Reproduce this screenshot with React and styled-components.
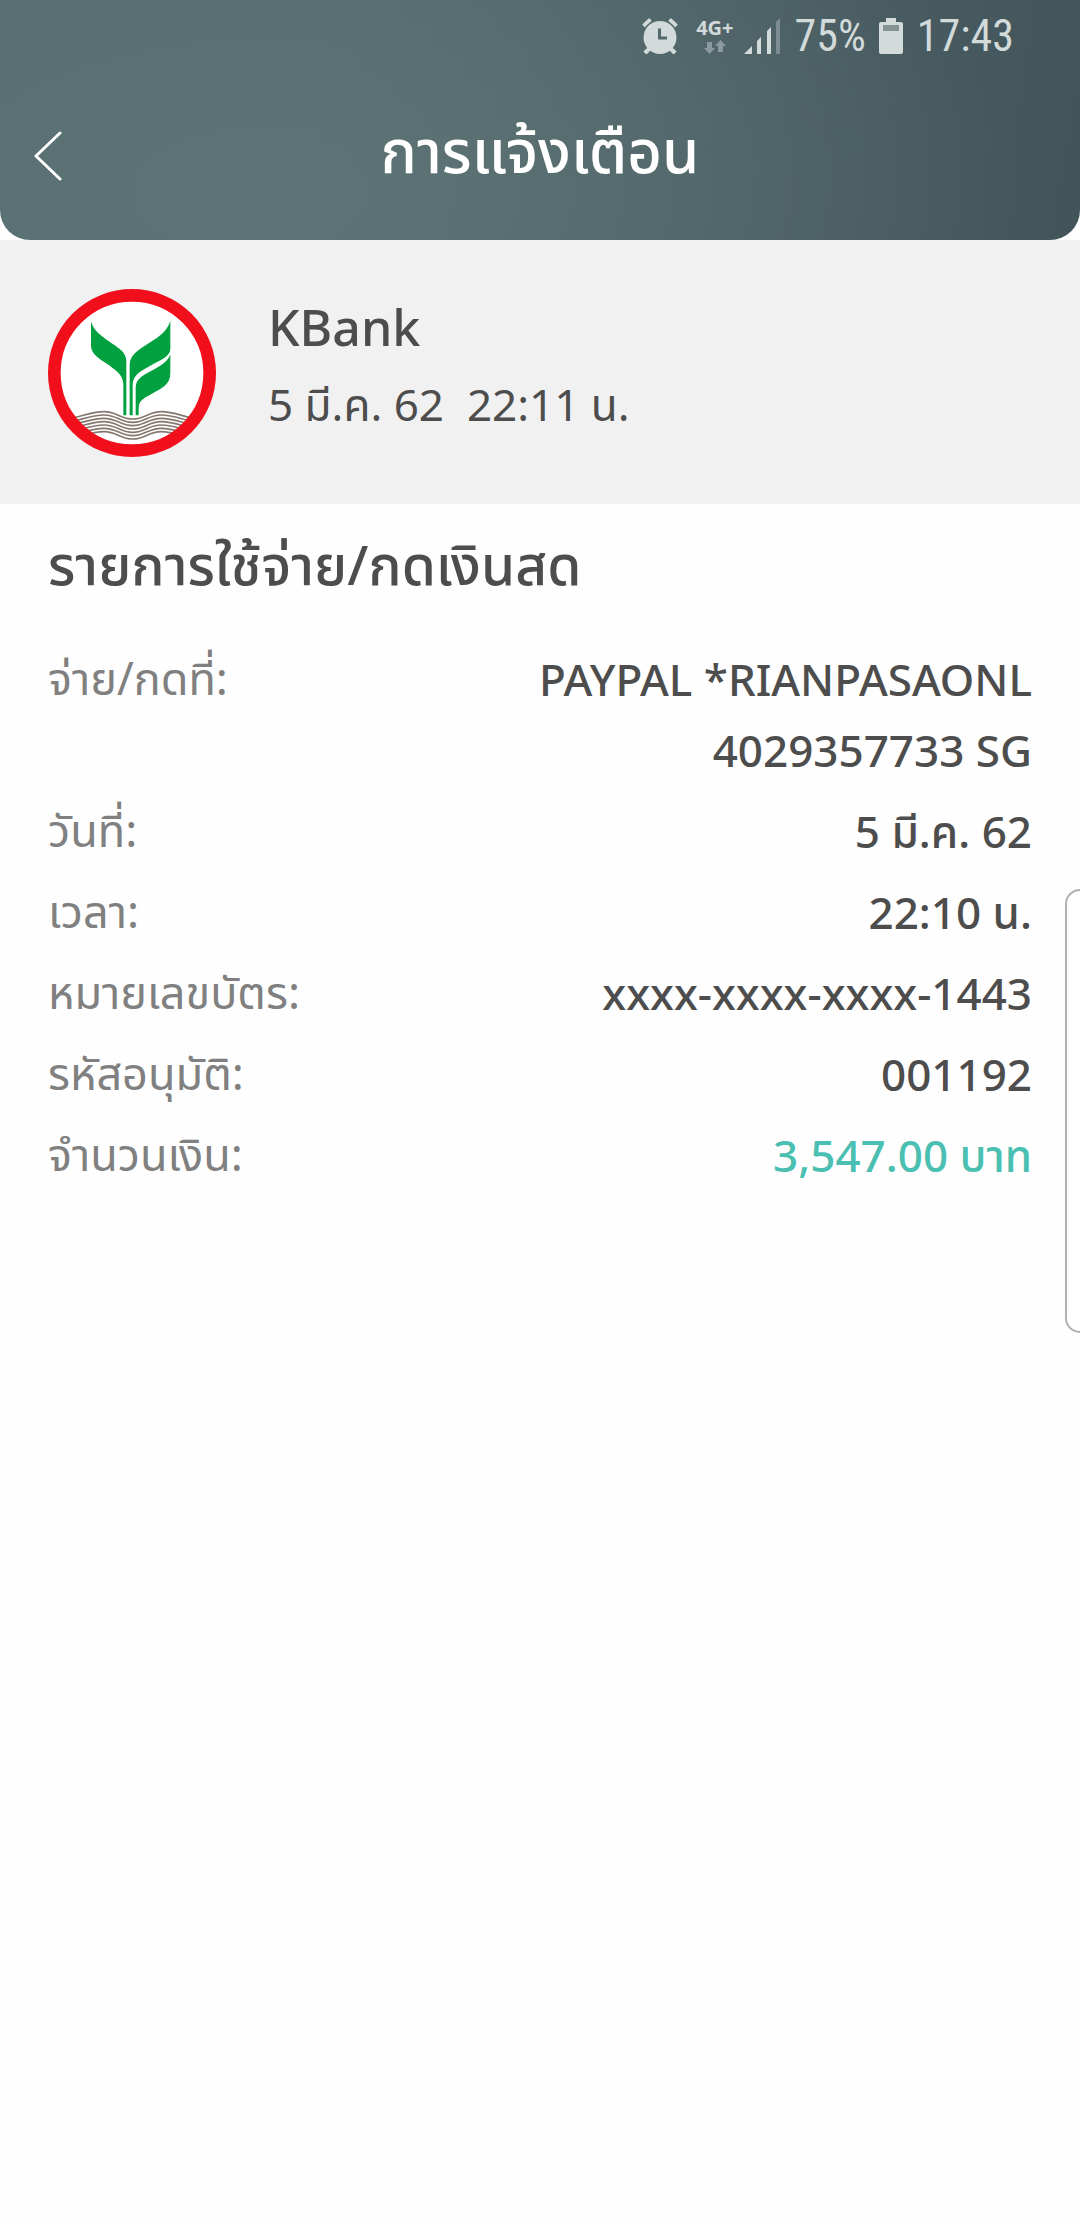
import React from "react";
import styled, { createGlobalStyle } from "styled-components";

const GlobalStyle = createGlobalStyle`
  * { box-sizing: border-box; }
  body {
    margin: 0;
    background: #fefefe;
    color: #4d4d4d;
    font-family: "Noto Sans", "Noto Sans Thai", sans-serif;
  }
`;

const Screen = styled.div`
  position: relative;
  min-height: 100vh;
`;

const Header = styled.header`
  height: 240px;
  border-radius: 0 0 30px 30px;
  background:
    radial-gradient(ellipse 70% 150% at 25% 80%, rgba(94, 116, 118, 0.9), rgba(94, 116, 118, 0) 100%),
    linear-gradient(100deg, #566d70 30%, #42545a 100%);
`;

const StatusBar = styled.div`
  display: flex;
  align-items: center;
  justify-content: flex-end;
  height: 72px;
  padding-right: 66px;
  color: #d2dada;
`;

const StatusIcon = styled.svg`
  display: block;
  flex: none;
  margin-right: ${(p) => p.$gap}px;
`;

const StatusText = styled.span`
  font-family: "Roboto Condensed", Roboto, sans-serif;
  font-size: 44px;
  line-height: 72px;
  margin-right: ${(p) => p.$gap || 0}px;
`;

const Network = styled.div`
  display: flex;
  flex-direction: column;
  align-items: center;
  gap: 2px;
  margin-right: 10px;
  font-size: 20px;
  line-height: 20px;
  font-weight: 700;
`;

const TitleBar = styled.div`
  display: grid;
  grid-template-columns: 96px 1fr 96px;
  align-items: center;
  height: 168px;
`;

const BackButton = styled.button`
  display: flex;
  align-items: center;
  justify-content: center;
  height: 96px;
  padding: 0;
  border: 0;
  background: none;
  color: #fff;
`;

const Title = styled.h1`
  margin: 0;
  padding-bottom: 12px;
  color: #fff;
  font-size: 60px;
  line-height: 84px;
  font-weight: 500;
  text-align: center;
`;

const Sender = styled.section`
  display: flex;
  gap: 52px;
  height: 264px;
  padding: 49px 48px;
  background: #f1f1f1;
`;

const SenderText = styled.div`
  display: flex;
  flex-direction: column;
`;

const SenderName = styled.h2`
  margin: 0;
  font-size: 50px;
  line-height: 76px;
  font-weight: 500;
`;

const SenderDate = styled.time`
  font-size: 44px;
  line-height: 78px;
  white-space: pre;
`;

const Details = styled.main`
  padding: 20px 48px;
`;

const Heading = styled.h2`
  margin: 0 0 40px;
  font-size: 55px;
  line-height: 80px;
  font-weight: 500;
`;

const Rows = styled.dl`
  display: flex;
  flex-direction: column;
  gap: 10px;
  margin: 0;
`;

const Row = styled.div`
  display: flex;
  align-items: flex-start;
  justify-content: space-between;
  font-size: 44px;
  line-height: 71px;
`;

const Label = styled.dt`
  color: #808080;
  font-size: 45px;
  line-height: 68px;
`;

const Value = styled.dd`
  margin: 0;
  font-weight: 500;
  text-align: right;
  white-space: pre-line;
  color: ${(p) => (p.$accent ? "#4bbfb1" : "inherit")};
`;

const EdgePanel = styled.aside`
  position: absolute;
  top: 889px;
  right: 0;
  width: 15px;
  height: 444px;
  border: 2px solid #b0b0b0;
  border-right: 0;
  border-radius: 20px 0 0 20px;
  background: #fff;
`;

const rows = [
  { label: "จ่าย/กดที่:", value: "PAYPAL *RIANPASAONL\n4029357733 SG" },
  { label: "วันที่:", value: "5 มี.ค. 62" },
  { label: "เวลา:", value: "22:10 น." },
  { label: "หมายเลขบัตร:", value: "xxxx-xxxx-xxxx-1443" },
  { label: "รหัสอนุมัติ:", value: "001192" },
  { label: "จำนวนเงิน:", value: "3,547.00 บาท", accent: true },
];

function AlarmIcon() {
  return (
    <StatusIcon $gap={18} width="36" height="36" viewBox="0 0 36 36" fill="currentColor" aria-label="Alarm">
      <path d="M1.500 8 8.500 1.500M34.500 8 27.500 1.500M3 35 9 29M33 35 27 29" stroke="currentColor" strokeWidth="4" />
      <circle cx="18" cy="19.500" r="18" fill="#53686b" />
      <path d="M3 35 9 29M33 35 27 29" stroke="currentColor" strokeWidth="4" />
      <circle cx="18" cy="19.500" r="16.500" />
      <path d="M17.500 10.500V20H25" fill="none" stroke="#53686b" strokeWidth="3" />
    </StatusIcon>
  );
}

function DataArrows() {
  return (
    <svg width="22" height="14" viewBox="0 0 22 14" fill="#8b9a9c" aria-hidden="true">
      <path d="M3 2h5v6h3l-5.500 6L0 8h3zM14 12h5V6h3L16.500 0 11 6h3z" />
    </svg>
  );
}

function SignalIcon() {
  return (
    <StatusIcon $gap={15} width="36" height="36" viewBox="0 0 36 36" fill="currentColor" aria-label="Signal">
      <path d="M0 36 8 28V36zM13 36V23L17 19V36zM23 36V13L27 9V36z" />
      <path d="M32 36V4L36 0V36z" fill="#7d8d90" />
    </StatusIcon>
  );
}

function BatteryIcon() {
  return (
    <StatusIcon $gap={14} width="24" height="36" viewBox="0 0 24 36" aria-label="Battery">
      <path d="M7 0H17V4H22Q24 4 24 6V34Q24 36 22 36H2Q0 36 0 34V6Q0 4 2 4H7z" fill="currentColor" />
      <path d="M4 7H20V13H4z" fill="#849294" />
    </StatusIcon>
  );
}

function BankLogo() {
  const waves = [0, 10, 20, 30, 40, 50, 60];
  return (
    <svg width="168" height="168" viewBox="54 57 504 504" role="img" aria-label="KBank">
      <clipPath id="disc">
        <circle cx="306" cy="309" r="216" />
      </clipPath>
      <circle cx="306" cy="309" r="233" fill="#fff" />
      <g clipPath="url(#disc)" fill="none" stroke="#85776e" strokeWidth="5">
        {waves.map((dy) => (
          <path
            key={dy}
            d={`M84 ${449 + dy}C140 ${449 + dy} 172 ${425 + dy} 222 ${425 + dy}C262 ${425 + dy} 270 ${447 + dy} 308 ${447 + dy}C346 ${447 + dy} 354 ${425 + dy} 394 ${425 + dy}C440 ${425 + dy} 474 ${449 + dy} 530 ${449 + dy}`}
          />
        ))}
      </g>
      <circle cx="306" cy="309" r="233" fill="none" stroke="#f00f1b" strokeWidth="38" />
      <g fill="#02a13f">
        <path d="M183 154C194 197 248 216 276 243Q289 256 289 276V436H280V345C280 318 264 306 243 290C216 270 183 257 183 226z" />
        <path d="M421 152C408 197 360 213 327 239Q299 258 299 285V436H308V345C308 313 336 302 365 285C394 268 421 259 421 236z" />
        <path d="M421 253C412 283 372 297 343 314Q317 329 317 350V436H326V410C328 390 344 383 366 371C393 356 421 345 421 310z" />
      </g>
    </svg>
  );
}

export default function App() {
  return (
    <Screen>
      <GlobalStyle />
      <Header>
        <StatusBar>
          <AlarmIcon />
          <Network>
            <span>4G+</span>
            <DataArrows />
          </Network>
          <SignalIcon />
          <StatusText $gap={13}>75%</StatusText>
          <BatteryIcon />
          <StatusText>17:43</StatusText>
        </StatusBar>
        <TitleBar>
          <BackButton aria-label="Back">
            <svg width="28" height="50" viewBox="0 0 28 50" fill="none" stroke="currentColor" strokeWidth="3" strokeLinecap="round" strokeLinejoin="round">
              <path d="M26 2 2 25 26 48" />
            </svg>
          </BackButton>
          <Title>การแจ้งเตือน</Title>
        </TitleBar>
      </Header>
      <Sender>
        <BankLogo />
        <SenderText>
          <SenderName>KBank</SenderName>
          <SenderDate>{"5 มี.ค. 62  22:11 น."}</SenderDate>
        </SenderText>
      </Sender>
      <Details>
        <Heading>รายการใช้จ่าย/กดเงินสด</Heading>
        <Rows>
          {rows.map((row) => (
            <Row key={row.label}>
              <Label>{row.label}</Label>
              <Value $accent={row.accent}>{row.value}</Value>
            </Row>
          ))}
        </Rows>
      </Details>
      <EdgePanel />
    </Screen>
  );
}
